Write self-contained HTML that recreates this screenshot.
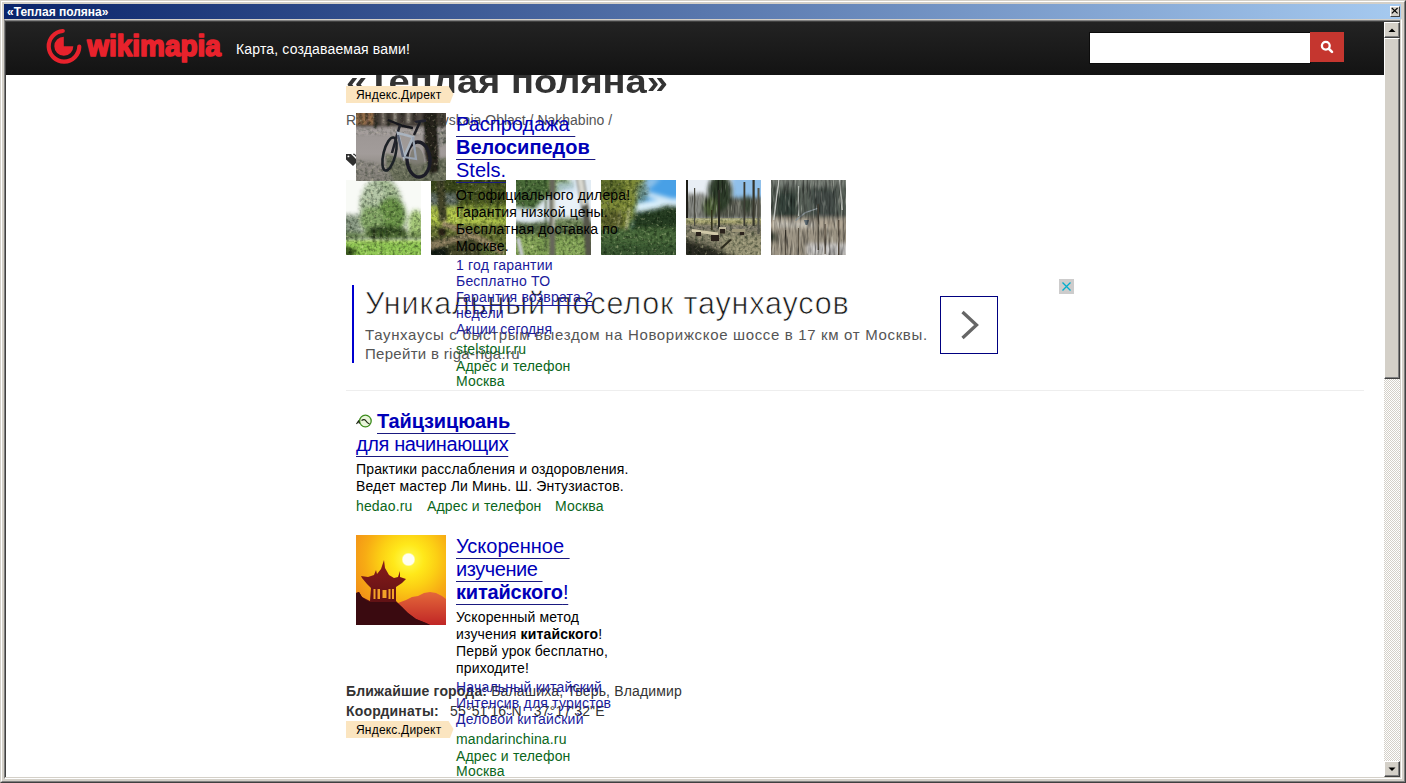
<!DOCTYPE html>
<html lang="ru">
<head>
<meta charset="utf-8">
<title>«Теплая поляна»</title>
<style>
*{box-sizing:border-box;margin:0;padding:0}
html,body{width:1406px;height:783px;overflow:hidden}
body{background:#d4d0c8;font-family:"Liberation Sans",sans-serif;position:relative;color:#000}
.abs{position:absolute}
#frame{position:absolute;left:0;top:0;width:1406px;height:783px;border-top:1px solid #d4d0c8;border-left:1px solid #d4d0c8;border-right:1px solid #404040;border-bottom:1px solid #404040}
#frame2{position:absolute;left:1px;top:1px;width:1404px;height:781px;border-top:1px solid #fff;border-left:1px solid #fff;border-right:1px solid #808080;border-bottom:1px solid #808080}
#titlebar{position:absolute;left:4px;top:4px;width:1397px;height:15px;background:linear-gradient(90deg,#0a246a 0%,#a6caf0 100%)}
#titletext{position:absolute;left:3px;top:1px;font-weight:bold;font-size:12px;line-height:15px;color:#fff;white-space:nowrap}
#closebtn{position:absolute;left:1390px;top:6px;width:10px;height:11px;background:#d4d0c8;border-top:1px solid #fff;border-left:1px solid #fff;border-right:1px solid #404040;border-bottom:1px solid #404040}
#sunk{position:absolute;left:4px;top:19px;width:1398px;height:760px;border-top:1px solid #d4d0c8;border-left:1px solid #808080;border-right:1px solid #fff;border-bottom:1px solid #fff;background:#d4d0c8}
#sunk2{position:absolute;left:5px;top:20px;width:1395px;height:757px;border-top:1px solid #808080;border-left:0;overflow:hidden;background:#fff}
#view{position:absolute;left:0;top:0;width:1379px;height:756px;overflow:hidden;background:#fff}
#hdr{position:absolute;left:0;top:0;width:1379px;height:54px;background:linear-gradient(#232323 0%,#131313 100%);z-index:50}
#sb{position:absolute;left:1379px;top:0;width:16px;height:756px;background:#fff;background-image:linear-gradient(45deg,#d4d0c8 25%,transparent 25%,transparent 75%,#d4d0c8 75%),linear-gradient(45deg,#d4d0c8 25%,transparent 25%,transparent 75%,#d4d0c8 75%);background-size:2px 2px;background-position:0 0,1px 1px}
.btn3d{position:absolute;left:0;width:16px;background:#d4d0c8;border-top:1px solid #fff;border-left:1px solid #fff;border-right:1px solid #404040;border-bottom:1px solid #404040;box-shadow:inset -1px -1px 0 #808080}
.t{position:absolute;white-space:nowrap}
#pg{position:absolute;left:-5px;top:-21px;width:1406px;height:783px}
#h1{left:346px;top:57px;font-size:34px;line-height:48px;transform:scaleX(1.12);transform-origin:0 0;font-weight:bold;color:#333}
.yd{position:absolute;left:346px;width:108px;height:17px}
.yd span{position:absolute;left:10px;top:1px;font-size:12px;line-height:17px;color:#000;white-space:nowrap;letter-spacing:0.2px}
.bc{font-size:14px;line-height:20px;color:#555}
.ttl{font-size:20px;line-height:23px;color:#0000b8;text-decoration:underline;text-decoration-thickness:1px;text-underline-offset:5px;text-decoration-color:#1a1a80;white-space:pre}
.body{font-size:14px;line-height:17px;color:#000;white-space:pre;letter-spacing:0.15px}
.sl{font-size:14px;line-height:16px;color:#1a1a9c;white-space:pre;letter-spacing:0.2px}
.sl u{text-decoration-thickness:1px;text-underline-offset:3px}
.dm{font-size:14px;line-height:16px;color:#0a6620;white-space:pre;letter-spacing:0.15px}
.meta{font-size:14px;line-height:20px;color:#333;letter-spacing:0.16px}
.th{position:absolute;top:180px;width:75px;height:75px;overflow:hidden}

</style>
</head>
<body>
<svg width="0" height="0" style="position:absolute"><defs>
<filter id="b1" x="-10%" y="-10%" width="120%" height="120%"><feGaussianBlur stdDeviation="1.1"/></filter>
<filter id="b2" x="-10%" y="-10%" width="120%" height="120%"><feGaussianBlur stdDeviation="2"/></filter>
<filter id="b05" x="-10%" y="-10%" width="120%" height="120%"><feGaussianBlur stdDeviation="0.6"/></filter>
<filter id="tex" x="0" y="0" width="100%" height="100%" color-interpolation-filters="sRGB"><feTurbulence type="fractalNoise" baseFrequency="0.32" numOctaves="2" seed="4" result="n"/><feColorMatrix in="n" type="matrix" values="0 0 0 0 0  0 0.1 0 0 0  0 0 0 0 0  1.25 0 0 0 -0.54" result="d"/><feColorMatrix in="n" type="matrix" values="0 0 0 0 1  0 0 0 0 1  0 0 0 0 0.8  0 -1.4 0 0 0.55" result="l"/><feComposite in="d" in2="SourceGraphic" operator="in" result="dd"/><feComposite in="l" in2="SourceGraphic" operator="in" result="ll"/><feMerge><feMergeNode in="SourceGraphic"/><feMergeNode in="dd"/><feMergeNode in="ll"/></feMerge></filter>
<filter id="texv" x="0" y="0" width="100%" height="100%" color-interpolation-filters="sRGB"><feTurbulence type="fractalNoise" baseFrequency="0.5 0.06" numOctaves="2" seed="7" result="n"/><feColorMatrix in="n" type="matrix" values="0 0 0 0 0  0 0 0 0 0  0 0 0 0 0  1.3 0 0 0 -0.56" result="d"/><feColorMatrix in="n" type="matrix" values="0 0 0 0 1  0 0 0 0 1  0 0 0 0 0.95  0 -1.5 0 0 0.62" result="l"/><feComposite in="d" in2="SourceGraphic" operator="in" result="dd"/><feComposite in="l" in2="SourceGraphic" operator="in" result="ll"/><feMerge><feMergeNode in="SourceGraphic"/><feMergeNode in="dd"/><feMergeNode in="ll"/></feMerge></filter>
</defs></svg>
<div id="frame"></div><div id="frame2"></div>
<div id="titlebar"><div id="titletext">«Теплая поляна»</div></div>
<div id="closebtn"><svg width="8" height="9" viewBox="0 0 8 9" style="position:absolute;left:0;top:0"><path d="M0.800 1 L6.600 6.400 M6.600 1 L0.800 6.400" stroke="#000" stroke-width="1.150" fill="none"/></svg></div>
<div id="sunk"></div>
<div id="sunk2">
 <div id="view">
  
  <div id="pg">
   <div class="t" id="h1">«Теплая поляна»</div>
   <div class="t bc" style="left:346px;top:110px">Russia / Moskovskaia Oblast / Nakhabino /</div>
   <svg class="abs" id="tag" style="left:346px;top:153px" width="12" height="14" viewBox="0 0 12 14"><path d="M0 1 L5 1 L12 8 L7 13 L0 6.500 Z" fill="#2f2f2f"/><circle cx="2.400" cy="3.400" r="0.950" fill="#fff"/><path d="M7 1.300 L8.300 1.300 L11 4" fill="none" stroke="#333" stroke-width="1.100"/></svg>
   <!-- thumbnails -->
   <div class="th" id="th1" style="left:346px;background:#7d9a5a"><svg width="75" height="75" viewBox="0 0 75 75"><rect width="75" height="75" fill="#f8faf6"/><g filter="url(#tex)"><g filter="url(#b2)"><ellipse cx="35" cy="26" rx="21" ry="28" fill="#a2b890"/><ellipse cx="28" cy="16" rx="11" ry="15" fill="#b4c6a6"/><ellipse cx="45" cy="36" rx="15" ry="19" fill="#6c9448"/><ellipse cx="26" cy="40" rx="12" ry="14" fill="#86a868"/><rect x="-4" y="35" width="18" height="26" fill="#8c9c86"/><ellipse cx="70" cy="45" rx="8" ry="15" fill="#a6c878"/><ellipse cx="40" cy="53" rx="21" ry="7" fill="#2f4420"/><rect x="-4" y="52" width="84" height="8" fill="#5c7a3c" opacity=".75"/></g><g filter="url(#b1)"><rect x="-3" y="60" width="82" height="20" fill="#92c854"/><rect x="-3" y="60" width="82" height="3" fill="#a8d468"/><path d="M-3 65 L12 70 L4 80 L-3 80 Z" fill="#3f5f24"/><rect x="27" y="48" width="2" height="15" fill="#1e2c16"/><rect x="34" y="50" width="1.500" height="14" fill="#263618"/><rect x="40" y="50" width="1.500" height="13" fill="#263618"/><rect x="57" y="48" width="1.500" height="14" fill="#2f411b"/></g></g></svg></div>
   <div class="th" id="th2" style="left:431px;background:#5b6b2e"><svg width="75" height="75" viewBox="0 0 75 75"><rect width="75" height="75" fill="#5d6a2c"/><g filter="url(#tex)"><g filter="url(#b2)"><rect x="-4" y="-4" width="84" height="30" fill="#3a461e"/><rect x="-4" y="14" width="30" height="12" fill="#66726a"/><rect x="-4" y="27" width="84" height="17" fill="#b6ca4e"/><rect x="28" y="4" width="52" height="22" fill="#4e5c24"/><rect x="40" y="26" width="40" height="12" fill="#94ac40"/><rect x="-4" y="44" width="84" height="36" fill="#6a7636"/><path d="M-4 58 L40 52 L80 72 L80 80 L-4 80 Z" fill="#46482a"/><rect x="-4" y="66" width="22" height="14" fill="#181e12"/><rect x="50" y="66" width="30" height="12" fill="#596a30"/></g><g filter="url(#b1)"><path d="M5 -2 L13 -2 L16 40 L8 42 Z" fill="#45442a"/><path d="M12 41 L30 47 L62 62 L74 72 L70 75 L48 62 L26 52 L10 46 Z" fill="#9a8a66"/><path d="M-2 62 L36 54 L40 58 L0 70 Z" fill="#8c7e5e"/><ellipse cx="11" cy="52" rx="4" ry="4" fill="#2a2418"/><rect x="30" y="4" width="1.500" height="36" fill="#38401e"/><rect x="36" y="2" width="1.200" height="34" fill="#38401e"/><rect x="44" y="0" width="1.500" height="34" fill="#3c4420"/><rect x="58" y="0" width="1.500" height="36" fill="#3c4420"/><rect x="66" y="0" width="1.500" height="40" fill="#343c1c"/></g></g></svg></div>
   <div class="th" id="th3" style="left:516px;background:#6f8a55"><svg width="75" height="75" viewBox="0 0 75 75"><rect width="75" height="75" fill="#e2ecf4"/><g filter="url(#tex)"><g filter="url(#b2)"><path d="M-4 -4 H48 L42 12 L26 20 L18 30 L-4 26 Z" fill="#4a6a38"/><ellipse cx="44" cy="5" rx="12" ry="7" fill="#7d9a5a"/><rect x="-6" y="42" width="88" height="14" fill="#526642"/><rect x="38" y="38" width="30" height="10" fill="#6e8454"/><rect x="-6" y="55" width="88" height="26" fill="#7e9e52"/><ellipse cx="12" cy="64" rx="10" ry="8" fill="#8fae5e"/><rect x="40" y="60" width="26" height="16" fill="#8aaa5c"/></g></g><g filter="url(#b2)"><ellipse cx="52" cy="22" rx="10" ry="13" fill="#eaf2f8"/><ellipse cx="12" cy="36" rx="12" ry="6" fill="#dfe8f0"/><rect x="40" y="2" width="18" height="10" fill="#b8d4ec" opacity=".7"/></g><g filter="url(#b1)"><rect x="33.500" y="-2" width="5.500" height="80" fill="#66665a"/><rect x="36.500" y="18" width="2.500" height="30" fill="#b9b9aa"/><path d="M60 -2 L68 -2 L73 30 L77 80 L70 80 L67 36 Z" fill="#55544a"/><path d="M61 -2 L67 -2 L71 24 L66 26 Z" fill="#d8d8d0"/><rect x="29" y="20" width="1.500" height="50" fill="#4c5a3a"/><path d="M0 58 L4 58 L8 76 L4 76 Z" fill="#c8ccd0"/></g></svg></div>
   <div class="th" id="th4" style="left:601px;background:#4c6a3a"><svg width="75" height="75" viewBox="0 0 75 75"><rect width="75" height="75" fill="#48a0e6"/><g filter="url(#b2)"><path d="M34 22 L80 18 L80 34 L32 36 Z" fill="#d8eefa"/><path d="M44 11 L80 21 L80 26 L46 17 Z" fill="#cfe6f6"/><path d="M40 -2 L60 -2 L50 8 L42 12 Z" fill="#8cc0e8"/></g><g filter="url(#tex)"><g filter="url(#b2)"><path d="M-4 -4 H46 L40 10 L34 30 L28 50 L-4 52 Z" fill="#7e8a38"/><ellipse cx="10" cy="8" rx="14" ry="10" fill="#5c6a2a"/><ellipse cx="41" cy="12" rx="6" ry="10" fill="#6a8878" opacity=".8"/><path d="M33 33 L56 29 L64 26 L80 27 L80 50 L30 50 Z" fill="#263c22"/><rect x="-6" y="48" width="88" height="34" fill="#48693a"/><rect x="-6" y="64" width="88" height="20" fill="#3a5830"/><ellipse cx="12" cy="40" rx="12" ry="10" fill="#5a5e2c"/></g><g filter="url(#b1)"><path d="M24 50 L26 50 L29 28 L27.500 28 Z" fill="#c8c8a0"/><path d="M16 48 L17.500 48 L20 30 L19 30 Z" fill="#a8a878"/></g></g></svg></div>
   <div class="th" id="th5" style="left:686px;background:#6b6a55"><svg width="75" height="75" viewBox="0 0 75 75"><rect width="75" height="75" fill="#e8eef4"/><g filter="url(#b2)"><rect x="46" y="-4" width="34" height="26" fill="#90c0ea"/></g><g filter="url(#texv)"><g filter="url(#b2)"><rect x="-6" y="18" width="88" height="21" fill="#585c50"/><rect x="0" y="14" width="20" height="22" fill="#8a8c86"/><rect x="46" y="22" width="34" height="14" fill="#6a6c62"/><ellipse cx="34" cy="13" rx="12" ry="19" fill="#2f3d2a"/><ellipse cx="24" cy="27" rx="8" ry="10" fill="#4d5e38"/><ellipse cx="61" cy="25" rx="6" ry="9" fill="#3c4a38"/></g></g><g filter="url(#tex)"><g filter="url(#b2)"><rect x="-6" y="38" width="88" height="6" fill="#a8a468"/><rect x="-6" y="44" width="88" height="5" fill="#7c7672"/><rect x="-6" y="48" width="88" height="34" fill="#85816a"/><rect x="36" y="56" width="46" height="24" fill="#9a9678"/><path d="M-6 57 L20 65 L50 76 L50 82 L-6 82 Z" fill="#2c2c20"/></g></g><g filter="url(#b05)"><rect x="-1" y="0" width="3" height="38" fill="#1c1c18"/><rect x="32" y="10" width="2" height="38" fill="#2a2a20"/><rect x="25" y="30" width="1.600" height="20" fill="#33301f"/><rect x="8" y="8" width="1.200" height="38" fill="#4a4a40"/><rect x="57.500" y="2" width="1.800" height="44" fill="#3a3a30"/><rect x="66.500" y="0" width="2.200" height="46" fill="#34342a"/><rect x="71.500" y="8" width="2" height="46" fill="#54544a"/><path d="M6 49 L32 52.500 L32 55.500 L6 52 Z" fill="#d0c8a8"/><rect x="10" y="52" width="5" height="4" fill="#2a241c"/><rect x="25" y="55" width="8" height="6" fill="#2a241c"/><rect x="33" y="47" width="7" height="2.500" fill="#c0b89c"/><rect x="34" y="49" width="5" height="4.500" fill="#2a241c"/><rect x="46" y="49" width="13" height="3" fill="#9c9678"/><rect x="54" y="52" width="4" height="3" fill="#2a241c"/><path d="M34 68 L44 59 L46 60 L36 69 Z" fill="#2c2a1c"/></g></svg></div>
   <div class="th" id="th6" style="left:771px;background:#8a8a80"><svg width="75" height="75" viewBox="0 0 75 75"><rect width="75" height="75" fill="#9d988a"/><g filter="url(#texv)"><g filter="url(#b2)"><rect x="-6" y="-6" width="88" height="44" fill="#586058"/><rect x="-6" y="-6" width="88" height="12" fill="#7c827a"/><rect x="6" y="12" width="20" height="26" fill="#36423a"/><rect x="40" y="8" width="26" height="28" fill="#444e48"/><rect x="-6" y="38" width="88" height="12" fill="#b0a694"/><rect x="-6" y="49" width="88" height="33" fill="#9c9484"/><rect x="4" y="42" width="40" height="5" fill="#c8c4ba"/><rect x="36" y="64" width="46" height="12" fill="#cecccA"/><rect x="-6" y="52" width="12" height="10" fill="#40463a"/></g><g filter="url(#b05)"><path d="M7 0 L8.500 0 L3.500 40 L2 40 Z" fill="#ccd0ca"/><rect x="27" y="6" width="1.200" height="30" fill="#b4bab4"/><path d="M68 0 L69.500 0 L72 30 L70.500 30 Z" fill="#babeb8"/><rect x="46.500" y="24" width="1.400" height="46" fill="#4c463c"/><rect x="53.500" y="44" width="1.200" height="30" fill="#5a5044"/><rect x="67" y="40" width="1.400" height="35" fill="#5c5244"/><rect x="14" y="50" width="1.200" height="25" fill="#5a5246"/><rect x="27" y="48" width="1" height="27" fill="#625a4c"/><path d="M33 40 L38 40 L36.500 45 L34.500 45 Z" fill="#56646c"/><path d="M24 40 L34 32 L46 28 L46.500 29 L35 33 L25 41 Z" fill="#8a9498"/></g></g></svg></div>
   <!-- google ad -->
   <div class="abs" style="left:352px;top:285px;width:2px;height:78px;background:#0000d0"></div>
   <div class="t" id="gt" style="left:365px;top:285px;font-size:30.5px;line-height:36px;color:#1c1c1c;letter-spacing:0.85px;-webkit-text-stroke:0.7px #fff">Уникальный поселок таунхаусов</div>
   <div class="t gd" id="gd1" style="left:365px;top:326px;font-size:15px;line-height:18px;color:#555;letter-spacing:0.66px">Таунхаусы с быстрым выездом на Новорижское шоссе в 17 км от Москвы.</div>
   <div class="t gd" id="gd2" style="left:365px;top:345px;font-size:15px;line-height:18px;color:#555;letter-spacing:0.3px">Перейти в riga-riga.ru</div>
   <div class="abs" style="left:940px;top:296px;width:58px;height:58px;border:1px solid #000080;background:#fff"><svg width="56" height="56" viewBox="0 0 56 56"><path d="M21.500 15 L35.500 28 L21.500 41" fill="none" stroke="#666" stroke-width="3.300"/></svg></div>
   <div class="abs" style="left:1059px;top:279px;width:15px;height:15px;background:#cdcccc"><svg width="15" height="15" viewBox="0 0 15 15"><path d="M3.500 3.500 L11.500 11.500 M11.500 3.500 L3.500 11.500" stroke="#00aecd" stroke-width="1.300" fill="none"/></svg></div>
   <div class="abs" style="left:346px;top:390px;width:1018px;height:1px;background:#eee"></div>
   <!-- yandex block 1 -->
   <div class="yd" style="top:86px"><svg width="108" height="17" viewBox="0 0 108 17"><path d="M0 0 H102.500 L107.500 8 L104 17 H0 Z" fill="#fbe5c0"/></svg><span>Яндекс.Директ</span></div>
   <div class="abs" id="bike" style="left:356px;top:113px;width:90px;height:68px;overflow:hidden;z-index:2;background:#6f6a66"><svg width="90" height="68" viewBox="0 0 90 68"><defs><linearGradient id="bg1" x1="0" y1="0" x2="0" y2="1"><stop offset="0" stop-color="#4e463e"/><stop offset=".17" stop-color="#4a443e"/><stop offset=".25" stop-color="#9c9694"/><stop offset=".6" stop-color="#a29c9a"/><stop offset="1" stop-color="#7c7a6e"/></linearGradient></defs><rect width="90" height="68" fill="url(#bg1)"/><g filter="url(#tex)"><g filter="url(#b1)"><rect x="-2" y="-2" width="20" height="14" fill="#96704c"/><rect x="3" y="-2" width="3" height="14" fill="#5a4636"/><rect x="10" y="-2" width="3" height="14" fill="#6a5040"/><rect x="17" y="-2" width="5" height="18" fill="#3a342e"/><rect x="26" y="-2" width="3" height="14" fill="#8a8078"/><rect x="31" y="-2" width="3" height="15" fill="#342e2a"/><rect x="38" y="-2" width="2" height="12" fill="#b8b0a4"/><rect x="44" y="-2" width="4" height="12" fill="#3a3630"/><rect x="51" y="-2" width="2.500" height="12" fill="#aaa49a"/><rect x="57" y="-2" width="4" height="12" fill="#3c3630"/><rect x="84" y="-2" width="4" height="18" fill="#38342e"/><rect x="-2" y="14" width="94" height="8" fill="#aaa4a2" opacity=".6"/><path d="M30 40 L60 52 L92 44 L92 72 L30 72 Z" fill="#666c54" opacity=".75"/><path d="M-2 46 L30 52 L40 72 L-2 72 Z" fill="#8a8680" opacity=".7"/><path d="M67 -2 L81 -2 L83 58 L74 62 L69 40 Z" fill="#28241e"/><path d="M83 18 L92 16 L92 30 L83 34 Z" fill="#8c8a84"/></g></g><g filter="url(#b05)" fill="none"><ellipse cx="33.500" cy="41" rx="6" ry="17" transform="rotate(14 33.500 41)" stroke="#1e2028" stroke-width="2.600"/><ellipse cx="62.500" cy="46.500" rx="11.500" ry="17.500" transform="rotate(-4 62.500 46.500)" stroke="#1c1e28" stroke-width="3.400"/><ellipse cx="61" cy="47" rx="7" ry="13" transform="rotate(-4 61 47)" fill="#6e6e64" stroke="none" opacity=".6"/><path d="M32 7 L47 13 L57 15" stroke="#15161c" stroke-width="2.400"/><path d="M58 8 L70 6 L70 9 L60 10 Z" fill="#22242e"/><path d="M64 9 L58 22" stroke="#1a1c22" stroke-width="2.500"/><path d="M44 12 L41 22 L36 40" stroke="#20222a" stroke-width="2.600"/><path d="M42 20 L57 24 L48 44 Z" stroke="#aab4c0" stroke-width="2.600"/><path d="M57 24 L60 46 L48 44" stroke="#98a2b0" stroke-width="2.200"/><path d="M42 22 L47 44" stroke="#5a6274" stroke-width="2.400"/></g></svg></div>
   <div class="t ttl" style="left:456px;top:113px">Распродажа <br><b>Велосипедов </b><br>Stels.</div>
   <div class="t body" style="left:456px;top:187px">От официального дилера!<br>Гарантия низкой цены.<br>Бесплатная доставка по<br>Москве.</div>
   <div class="t sl" style="left:456px;top:257px">1 год гарантии<br>Бесплатно ТО<br><u>Гарантия возврата 2</u><br>недели<br>Акции сегодня</div>
   <div class="t dm" style="left:456px;top:341px">stelstour.ru</div>
   <div class="t dm" style="left:456px;top:358px">Адрес и телефон</div>
   <div class="t dm" style="left:456px;top:373px">Москва</div>
   <!-- ad 2 -->
   <div class="abs" id="fav" style="left:356px;top:413px;width:16px;height:16px"><svg width="20" height="16" viewBox="0 0 20 16" style="position:absolute;left:-3px;top:0"><circle cx="12.400" cy="8" r="5.800" fill="#eaf6dc" stroke="#3c8c1c" stroke-width="1.300"/><path d="M3.500 11 L5.500 8 L6.500 10.500 M8.500 7.500 Q11.500 5.500 13 8 T16.500 10.800" fill="none" stroke="#1a2410" stroke-width="1.200"/></svg></div>
   <div class="t ttl" style="left:377px;top:410px;letter-spacing:-0.15px"><b>Тайцзицюань </b></div>
   <div class="t ttl" style="left:356px;top:433px;letter-spacing:-0.4px">для начинающих</div>
   <div class="t body" style="left:356px;top:461px">Практики расслабления и оздоровления.<br>Ведет мастер Ли Минь. Ш. Энтузиастов.</div>
   <div class="t dm" style="left:356px;top:498px">hedao.ru</div>
   <div class="t dm" style="left:427px;top:498px">Адрес и телефон</div>
   <div class="t dm" style="left:555px;top:498px">Москва</div>
   <!-- ad 3 -->
   <div class="abs" id="pagoda" style="left:356px;top:535px;width:90px;height:90px;overflow:hidden;background:#f0a010"><svg width="90" height="90" viewBox="0 0 90 90"><defs><radialGradient id="sun" cx="52.500" cy="24.500" r="70" gradientUnits="userSpaceOnUse"><stop offset="0" stop-color="#fffbe0"/><stop offset=".075" stop-color="#ffffff"/><stop offset=".1" stop-color="#fff43a"/><stop offset=".22" stop-color="#ffe81a"/><stop offset=".4" stop-color="#fcd014"/><stop offset=".62" stop-color="#f7ac14"/><stop offset=".85" stop-color="#f29218"/><stop offset="1" stop-color="#e8701c"/></radialGradient><linearGradient id="mt" x1="0" y1="0" x2="0" y2="1"><stop offset="0" stop-color="#e4683a"/><stop offset="1" stop-color="#c02626"/></linearGradient><linearGradient id="rf" x1="0" y1="0" x2="0" y2="1"><stop offset="0" stop-color="#8a1c1a"/><stop offset="1" stop-color="#4a0c12"/></linearGradient></defs><rect width="90" height="90" fill="url(#sun)"/><circle cx="52.500" cy="24.500" r="5.600" fill="#fffef2"/><path d="M42 68 L50 65 L56 62 L62 61 L68 58 L74 57 L80 58 L86 61 L90 64 L90 90 L40 90 Z" fill="url(#mt)"/><path d="M28 25 L29 33 L33 40 L38 43 L42 42 L44 36 L44 42 L50 44 L46 48 L40 52 L40 66 L42 68 L46 72 L52 78 L60 84 L70 88 L74 90 L0 90 L0 58 L3 57 L6 62 L10 64 L14 66 L15 53 L11 49 L6 43 L5 41 L12 42 L18 40 L20 35 L21 39 L25 34 Z" fill="url(#rf)"/><path d="M0 58 L3 57 L6 62 L10 65 L14 67 L40 67 L46 72 L52 78 L60 84 L70 88 L74 90 L0 90 Z" fill="#3a0a10"/><g fill="#f2a228"><rect x="17.500" y="54" width="2" height="10"/><rect x="21.500" y="54" width="2.500" height="10"/><rect x="26.500" y="55" width="4" height="8"/><rect x="32.500" y="54" width="2" height="10"/><rect x="36" y="54" width="2" height="10"/></g></svg></div>
   <div class="t ttl" style="left:456px;top:535px">Ускоренное <br><span style="letter-spacing:-0.45px">изучение </span><br><span style="letter-spacing:-0.2px"><b>китайского</b>!</span></div>
   <div class="t body" style="left:456px;top:609px">Ускоренный метод<br>изучения <b>китайского</b>!<br>Первй урок бесплатно,<br>приходите!</div>
   <!-- meta -->
   <div class="t meta" style="left:346px;top:681px"><b>Ближайшие города:</b> Балашиха, Тверь, Владимир</div>
   <div class="t meta" style="left:346px;top:701px"><b>Координаты:</b></div>
   <div class="t meta" style="left:450px;top:701px">55°51'16"N&nbsp;&nbsp;&nbsp;37°17'32"E</div>
   <div class="yd" style="top:721px"><svg width="108" height="17" viewBox="0 0 108 17"><path d="M0 0 H102.500 L107.500 8 L104 17 H0 Z" fill="#fbe5c0"/></svg><span>Яндекс.Директ</span></div>
   <div class="t sl" style="left:456px;top:679px">Начальный китайский<br>Интенсив для туристов<br>Деловой китайский</div>
   <div class="t dm" style="left:456px;top:731px">mandarinchina.ru</div>
   <div class="t dm" style="left:456px;top:748px">Адрес и телефон</div>
   <div class="t dm" style="left:456px;top:763px">Москва</div>
  </div>
  <div id="hdr">
   <svg class="abs" id="logo" style="left:38px;top:5px" width="190" height="44" viewBox="0 0 190 44">
    <g fill="none" stroke="#e8222c" stroke-linecap="round">
     <path d="M19.800 5 A15.300 15.300 0 1 0 36.300 20.600" stroke-width="4.200"/>
    </g>
    <path d="M20.800 20.200 L20.800 10.800 A9.500 9.500 0 1 0 30.300 20.200 Z" fill="#e8222c"/>
    <text x="44.3" y="30.3" font-family="Liberation Sans, sans-serif" font-weight="bold" font-size="29.5" fill="#e8222c" stroke="#e8222c" stroke-width="1.7" stroke-linejoin="round" textLength="133.6" lengthAdjust="spacingAndGlyphs">wikimapia</text>
   </svg>
   <div class="t" id="tagline" style="left:231px;top:19px;font-size:14px;line-height:18px;color:#fff;letter-spacing:0.16px">Карта, создаваемая вами!</div>
   <div class="abs" style="left:1085px;top:12px;width:220px;height:30px;background:#fff;box-shadow:0 0 0 1px #0c0c0c"></div>
   <div class="abs" style="left:1305px;top:11px;width:34px;height:30px;background:#c5362f">
    <svg width="34" height="30" viewBox="0 0 34 30"><circle cx="15.8" cy="13.8" r="3.9" fill="none" stroke="#fff" stroke-width="2.3"/><path d="M18.8 16.8 L22 19.9" stroke="#fff" stroke-width="2.6" stroke-linecap="round"/></svg>
   </div>
  </div>
 </div>
 <div class="abs" style="left:0;top:0;width:1395px;height:1px;background:#404040;z-index:60"></div><div class="abs" style="left:0;top:0;width:1px;height:756px;background:#404040;z-index:60"></div>
 <div id="sb">
  <div class="btn3d" style="top:1px;height:16px"><svg width="14" height="14" viewBox="0 0 14 14" style="position:absolute;left:0;top:0"><path d="M3.500 9 L7 5.500 L10.500 9 Z" fill="#000"/></svg></div>
  <div class="btn3d" style="top:17px;height:341px"></div>
  <div class="btn3d" style="top:740px;height:16px"><svg width="14" height="14" viewBox="0 0 14 14" style="position:absolute;left:0;top:0"><path d="M3.500 5.500 L10.500 5.500 L7 9 Z" fill="#000"/></svg></div>
 </div>
</div>
</body>
</html>
